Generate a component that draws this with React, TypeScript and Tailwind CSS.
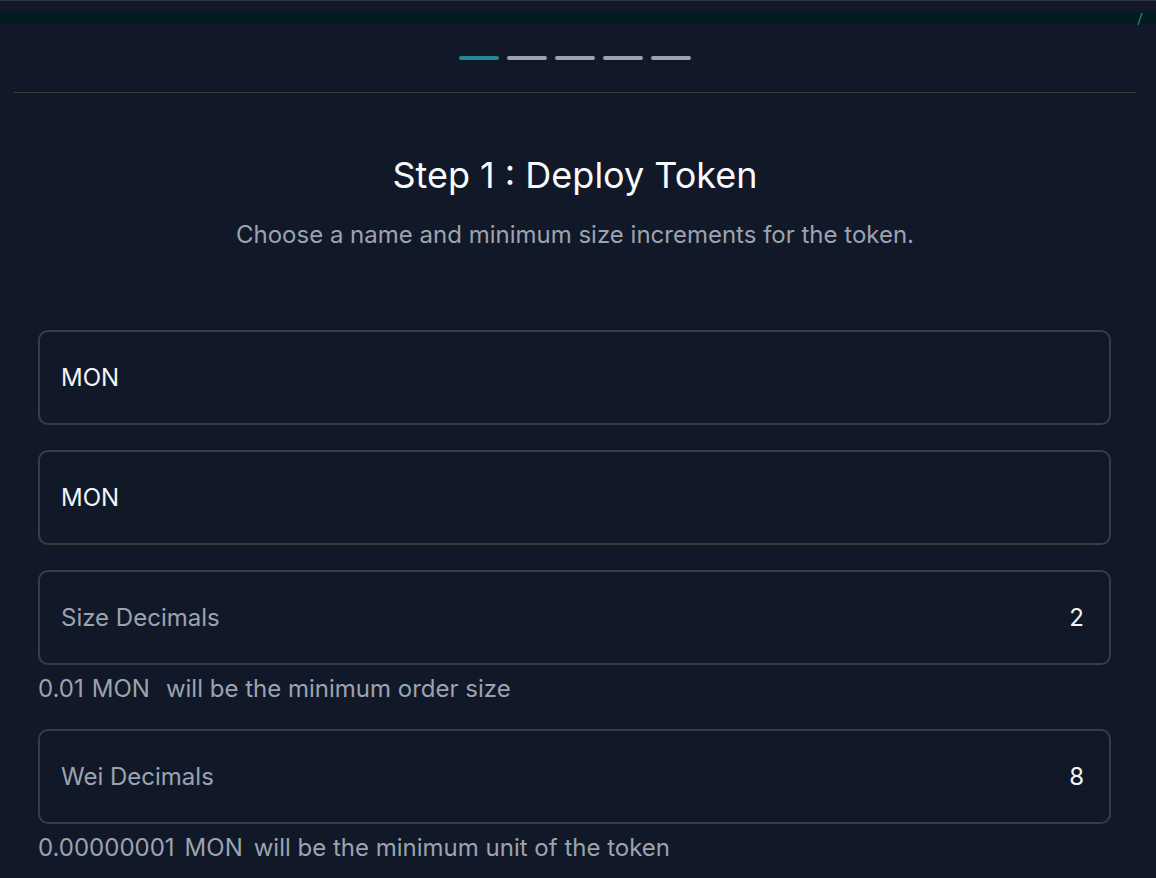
import React from "react";

const font = { fontFamily: "Inter, 'Noto Sans', sans-serif" };

const steps = [true, false, false, false, false];

interface FieldProps {
  label?: string;
  value: string;
}

const Field: React.FC<FieldProps> = ({ label, value }) => {
  return (
    <div className="flex h-[95px] items-center justify-between rounded-[10px] border-2 border-[#3b3c40] pl-[21px] pr-[25px] text-[24px] leading-[30px]">
      {label ? (
        <>
          <span className="text-[#9ca3af]">{label}</span>
          <span className="text-[#f3f4f6]">{value}</span>
        </>
      ) : (
        <span className="text-[#f3f4f6]">{value}</span>
      )}
    </div>
  );
};

const Helper: React.FC<{
  amount: string;
  text: string;
  gapA: string;
  gapB: string;
}> = ({ amount, text, gapA, gapB }) => (
  <p className="mt-[10px] flex text-[24px] leading-[28px] text-[#9ca3af]">
    <span>{amount}</span>
    <span className={gapA}>MON</span>
    <span className={gapB}>{text}</span>
  </p>
);

export default function App() {
  return (
    <div
      style={font}
      className="relative h-[878px] w-[1156px] overflow-hidden border-t border-[#30343a] bg-[#111827]"
    >
      <div className="mt-[11px] h-[12px] bg-[#021d1f]" />
      <svg
        className="absolute left-[1134px] top-[10px]"
        width="12"
        height="16"
        viewBox="0 0 12 16"
      >
        <path d="M8 2 L4 14" stroke="#2f6f6a" strokeWidth="1.5" />
      </svg>
      <div className="w-[1150px]">
        <div className="mt-[32px] flex justify-center gap-2">
          {steps.map((active, i) => (
            <div
              key={i}
              className={
                active
                  ? "h-1 w-10 rounded-full bg-[#25888f]"
                  : "h-1 w-10 rounded-full bg-[#9ca3af]"
              }
            />
          ))}
        </div>
        <div className="mx-[14px] mt-[32px] h-px bg-[#3a3b3f]" />

        <h1 className="mt-[62px] text-center text-[36px] leading-[40px] text-[#f9fafb]">
          Step 1 : Deploy Token
        </h1>
        <p className="mt-[26px] text-center text-[24px] leading-[28px] text-[#9ca3af]">
          Choose a name and minimum size increments for the token.
        </p>

        <div className="mt-[81px] flex flex-col pl-[38px] pr-[39px]">
          <Field value="MON" />
          <div className="mt-[25px]">
            <Field value="MON" />
          </div>
          <div className="mt-[25px]">
            <Field label="Size Decimals" value="2" />
          </div>
          <Helper
            amount="0.01"
            text="will be the minimum order size"
            gapA="ml-[8px]"
            gapB="ml-[16px]"
          />
          <div className="mt-[26px]">
            <Field label="Wei Decimals" value="8" />
          </div>
          <Helper
            amount="0.00000001"
            text="will be the minimum unit of the token"
            gapA="ml-[10px]"
            gapB="ml-[11px]"
          />
        </div>
      </div>
    </div>
  );
}
